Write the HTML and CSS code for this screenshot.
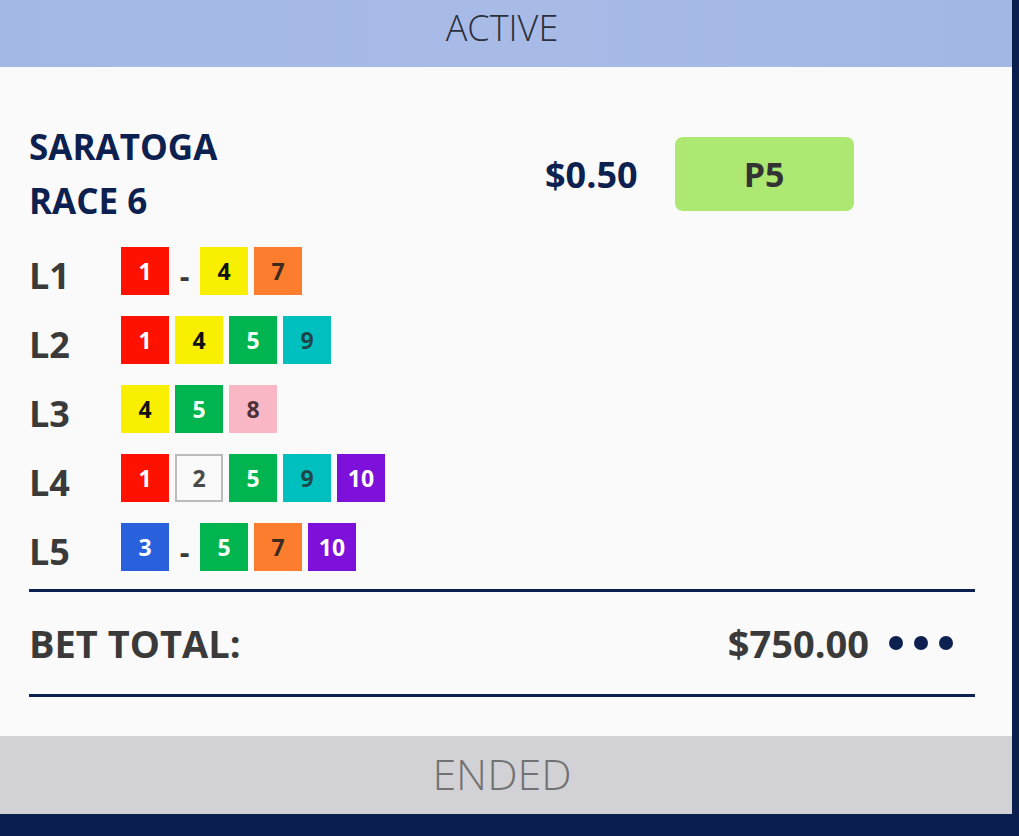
FILE: index.html
```html
<!DOCTYPE html>
<html>
<head>
  <title>Active Bets</title>
  <link rel="stylesheet" href="styles.css">
</head>
<body>
  <div class="card">
    <div class="status status-active">ACTIVE</div>

    <div class="bet">
      <div class="bet-head">
        <div class="track">
          <div>SARATOGA</div>
          <div>RACE 6</div>
        </div>
        <div class="amount">$0.50</div>
        <div class="bet-type">P5</div>
      </div>

      <div class="legs">
        <div class="leg">
          <span class="leg-name">L1</span>
          <span class="pick red">1</span>
          <span class="dash">-</span>
          <span class="pick yellow">4</span>
          <span class="pick orange">7</span>
        </div>
        <div class="leg">
          <span class="leg-name">L2</span>
          <span class="pick red">1</span>
          <span class="pick yellow">4</span>
          <span class="pick green">5</span>
          <span class="pick teal">9</span>
        </div>
        <div class="leg">
          <span class="leg-name">L3</span>
          <span class="pick yellow">4</span>
          <span class="pick green">5</span>
          <span class="pick pink">8</span>
        </div>
        <div class="leg">
          <span class="leg-name">L4</span>
          <span class="pick red">1</span>
          <span class="pick white">2</span>
          <span class="pick green">5</span>
          <span class="pick teal">9</span>
          <span class="pick purple">10</span>
        </div>
        <div class="leg">
          <span class="leg-name">L5</span>
          <span class="pick blue">3</span>
          <span class="dash">-</span>
          <span class="pick green">5</span>
          <span class="pick orange">7</span>
          <span class="pick purple">10</span>
        </div>
      </div>

      <div class="total">
        <span class="total-label">BET TOTAL:</span>
        <span class="total-value">$750.00</span>
        <span class="more"><i></i><i></i><i></i></span>
      </div>
    </div>

    <div class="status status-ended">ENDED</div>
  </div>
</body>
</html>
```

FILE: styles.css
```css
body {
  margin: 0;
  background-color: #0b1f4e;
  font-family: "Open Sans", "Liberation Sans", sans-serif;
}

.card {
  width: 1012px;
  height: 814px;
  display: flex;
  flex-direction: column;
  background-color: #fafafa;
}

.status {
  display: flex;
  justify-content: center;
  align-items: center;
  box-sizing: border-box;
  padding-right: 8px;
  font-weight: 300;
}

.status-active {
  height: 67px;
  padding-bottom: 12px;
  background: linear-gradient(90deg, #a4b8e6, #a8bbe7 50%, #a3b7e5);
  color: #2b2f3a;
  font-size: 36px;
}

.status-ended {
  height: 78px;
  padding-bottom: 4px;
  margin-top: auto;
  background-color: #d2d2d6;
  color: #727272;
  font-size: 43px;
}

.bet {
  padding: 53px 37px 0 29px;
}

.bet-head {
  display: flex;
  align-items: center;
}

.track {
  width: 516px;
  color: #0c2150;
  font-size: 35px;
  font-weight: 700;
  line-height: 54px;
}

.amount {
  color: #0c2150;
  font-size: 36px;
  font-weight: 700;
}

.bet-type {
  width: 179px;
  height: 74px;
  margin-left: 37px;
  display: flex;
  justify-content: center;
  align-items: center;
  background-color: #ade873;
  border-radius: 8px;
  color: #333;
  font-size: 34px;
  font-weight: 700;
}

.legs {
  margin-top: 19px;
}

.leg {
  display: flex;
  align-items: center;
  gap: 6px;
  height: 48px;
  margin-bottom: 21px;
}

.leg:last-child {
  margin-bottom: 0;
}

.leg-name {
  width: 86px;
  padding-top: 9px;
  color: #3a3a3a;
  font-size: 36px;
  font-weight: 700;
}

.pick {
  width: 48px;
  height: 48px;
  box-sizing: border-box;
  display: flex;
  justify-content: center;
  align-items: center;
  font-size: 23px;
  font-weight: 700;
}

.dash {
  width: 19px;
  text-align: center;
  padding-top: 8px;
  color: #3a3a3a;
  font-size: 30px;
  font-weight: 700;
}

.red { background-color: #ff1100; color: #fff; }
.yellow { background-color: #f8f000; color: #111; }
.orange { background-color: #fd7d2e; color: #3a2a20; }
.green { background-color: #00b450; color: #f4fff4; }
.teal { background-color: #00c0bf; color: #1b4747; }
.pink { background-color: #f9b7c6; color: #4a3238; }
.purple { background-color: #7d10d9; color: #fff; }
.blue { background-color: #2961dc; color: #fff; }
.white { background-color: #fafafa; border: 2px solid #bbb; color: #4a4a4a; }

.total {
  margin-top: 18px;
  width: 946px;
  height: 102px;
  border-top: 3px solid #0c2150;
  border-bottom: 3px solid #0c2150;
  display: flex;
  align-items: center;
}

.total-label {
  flex: 1;
  color: #3a3a3a;
  font-size: 38px;
  font-weight: 700;
}

.total-value {
  color: #3a3a3a;
  font-size: 38px;
  font-weight: 700;
}

.more {
  display: flex;
  gap: 11px;
  margin-left: 20px;
  margin-right: 22px;
}

.more i {
  width: 14px;
  height: 14px;
  border-radius: 50%;
  background-color: #0c2150;
}
```
